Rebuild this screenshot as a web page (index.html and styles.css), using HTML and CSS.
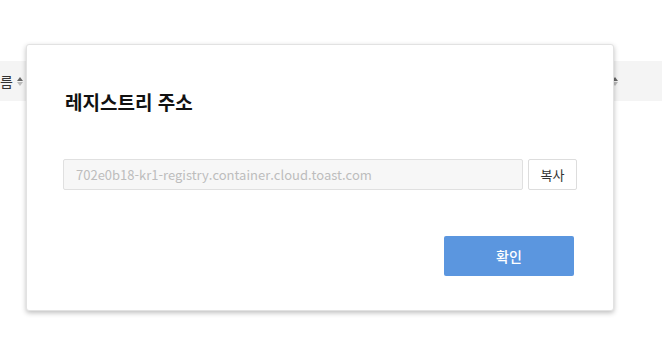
FILE: index.html
```html
<!DOCTYPE html>
<html lang="ko">
<head>
<meta charset="utf-8">
<link rel="stylesheet" href="styles.css">
</head>
<body>
<div class="page">
  <div class="table-head">
    <div class="th th-left">름 <span class="sort"><span class="up"></span><span class="down"></span></span></div>
    <div class="th th-right"><span class="sort"><span class="up"></span><span class="down"></span></span></div>
  </div>
</div>
<div class="modal">
  <h2 class="title">레지스트리 주소</h2>
  <div class="addr-row">
    <input class="addr" type="text" readonly placeholder="702e0b18-kr1-registry.container.cloud.toast.com">
    <button class="copy">복사</button>
  </div>
  <div class="actions">
    <button class="ok">확인</button>
  </div>
</div>
</body>
</html>
```

FILE: styles.css
```css
html, body {
  margin: 0;
  padding: 0;
  background: #fff;
  font-family: "Noto Sans CJK KR", "Noto Sans", sans-serif;
}
.page {
  padding-top: 61px;
}
.table-head {
  height: 40px;
  background: #f4f4f4;
  display: flex;
  align-items: center;
  justify-content: space-between;
}
.th {
  display: flex;
  align-items: center;
  font-size: 14px;
  color: #333;
}
.th-left {
  margin-left: 0;
  gap: 4px;
}
.th-right {
  margin-right: 44px;
}
.sort {
  display: inline-flex;
  flex-direction: column;
  gap: 1px;
}
.sort .up {
  width: 0; height: 0;
  border-left: 3px solid transparent;
  border-right: 3px solid transparent;
  border-bottom: 4px solid #666;
}
.sort .down {
  width: 0; height: 0;
  border-left: 3px solid transparent;
  border-right: 3px solid transparent;
  border-top: 4px solid #bbb;
}
.modal {
  position: absolute;
  left: 26px;
  top: 44px;
  width: 588px;
  height: 267px;
  box-sizing: border-box;
  background: #fff;
  border: 1px solid #e2e2e2;
  border-radius: 3px;
  box-shadow: 0 2px 5px rgba(0,0,0,0.25);
  padding: 43px 36px 0 36px;
  display: flex;
  flex-direction: column;
}
.title {
  margin: 0 0 0 2px;
  font-size: 19px;
  font-weight: 700;
  line-height: 28px;
  color: #111;
}
.addr-row {
  margin-top: 43px;
  display: flex;
  gap: 5px;
}
.addr {
  width: 460px;
  height: 31px;
  box-sizing: border-box;
  border: 1px solid #e0e0e0;
  border-radius: 2px;
  background: #f7f7f7;
  padding: 0 12px;
  font-family: "Noto Sans CJK KR", "Noto Sans", sans-serif;
  font-size: 13px;
  color: #bbb;
  outline: none;
}
.addr::placeholder {
  color: #bdbdbd;
}
.copy {
  width: 49px;
  height: 31px;
  box-sizing: border-box;
  border: 1px solid #ddd;
  border-radius: 2px;
  background: #fff;
  font-family: "Noto Sans CJK KR", "Noto Sans", sans-serif;
  font-size: 13px;
  color: #333;
  padding: 0;
}
.actions {
  margin-top: 46px;
  display: flex;
  justify-content: flex-end;
  padding-right: 3px;
}
.ok {
  width: 130px;
  height: 40px;
  border: none;
  border-radius: 2px;
  background: #5b96df;
  color: #fff;
  font-family: "Noto Sans CJK KR", "Noto Sans", sans-serif;
  font-size: 14px;
  font-weight: 500;
  padding: 0;
}
```
